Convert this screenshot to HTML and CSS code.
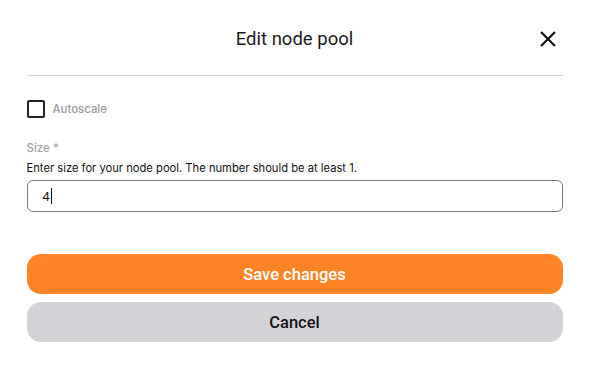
FILE: index.html
```html
<!doctype html>
<html>

<head>
    <title>Edit node pool</title>
    <link rel="stylesheet" href="styles.css">
</head>

<body>
    <div class="dialog">
        <header class="dialog-head">
            <h1 class="title">Edit node pool</h1>
            <button type="button" class="close" aria-label="Close">
                <svg width="18" height="18" viewBox="0 0 18 18">
                    <path d="M2 2L16 16M16 2L2 16" stroke="#111" stroke-width="2.2" fill="none"/>
                </svg>
            </button>
        </header>
        <hr class="divider">

        <label class="check-row">
            <span class="checkbox"></span>
            <span class="check-label">Autoscale</span>
        </label>

        <div class="field">
            <label class="field-label" for="size">Size *</label>
            <p class="hint">Enter size for your node pool. The number should be at least 1.</p>
            <div class="input">4<span class="caret"></span></div>
        </div>

        <div class="actions">
            <button type="button" class="btn save">Save changes</button>
            <button type="button" class="btn cancel">Cancel</button>
        </div>
    </div>
</body>

</html>
```

FILE: styles.css
```css
* {
    margin: 0;
    box-sizing: border-box;
}

body {
    background-color: white;
    font-family: Roboto, "Liberation Sans", sans-serif;
    color: #111;
}

.dialog {
    width: 536px;
    margin: 0 auto;
    padding-top: 27px;
}

.dialog-head {
    display: flex;
    justify-content: center;
    align-items: center;
    position: relative;
    height: 24px;
}

.title {
    font-size: 18.5px;
    font-weight: 400;
    color: #1a1a1a;
}

.close {
    position: absolute;
    right: 6px;
    top: 3px;
    border: none;
    background: none;
    padding: 0;
    width: 18px;
    height: 18px;
    cursor: pointer;
}

.divider {
    border: none;
    border-top: 1px solid #d6d6d6;
    margin-top: 24px;
}

.check-row {
    display: flex;
    align-items: center;
    gap: 8px;
    margin-top: 24px;
}

.checkbox {
    width: 18px;
    height: 18px;
    border: 2px solid #222;
    border-radius: 2px;
}

.check-label {
    font-family: Inter, sans-serif;
    font-size: 11.4px;
    font-weight: 500;
    color: #9a9a9a;
}

.field {
    margin-top: 23px;
}

.field-label {
    display: block;
    font-family: Inter, sans-serif;
    font-size: 11.5px;
    font-weight: 500;
    color: #a3a3a3;
    line-height: 14px;
}

.hint {
    font-family: Inter, sans-serif;
    font-size: 11.2px;
    color: #111;
    margin-top: 6px;
    line-height: 14px;
}

.input {
    margin-top: 5px;
    height: 32px;
    border: 1px solid #7a7a7a;
    border-radius: 6px;
    padding-left: 15px;
    display: flex;
    align-items: center;
    font-family: "Liberation Sans", Arial, sans-serif;
    font-size: 13px;
    color: #111;
}

.caret {
    display: inline-block;
    width: 1px;
    height: 16px;
    background-color: #111;
    margin-left: 1px;
}

.actions {
    margin-top: 42px;
    display: flex;
    flex-direction: column;
    gap: 8px;
}

.btn {
    height: 40px;
    border: none;
    border-radius: 14px;
    font-family: Roboto, sans-serif;
    font-size: 16.5px;
    font-weight: 500;
    cursor: pointer;
}

.save {
    background-color: #ff8426;
    color: white;
}

.cancel {
    background-color: #d4d4d8;
    color: #111;
}
```
